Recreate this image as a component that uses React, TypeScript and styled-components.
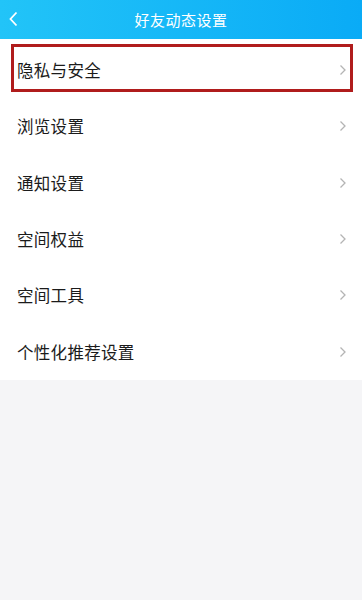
import React from "react";
import styled, { createGlobalStyle } from "styled-components";

const GlobalStyle = createGlobalStyle`
  html, body {
    margin: 0;
    padding: 0;
    background: #f5f5f7;
  }
  body {
    font-family: "Noto Sans CJK SC", "Noto Sans", sans-serif;
  }
`;

const Page = styled.div`
  width: 362px;
  min-height: 600px;
  background: #f5f5f7;
  display: flex;
  flex-direction: column;
`;

const Header = styled.header`
  height: 39px;
  background: linear-gradient(90deg, #22c4f8 0%, #0aabf6 100%);
  display: flex;
  align-items: center;
  justify-content: center;
  position: relative;
`;

const BackButton = styled.div`
  position: absolute;
  left: 8px;
  top: 10px;
  width: 12px;
  height: 18px;
  display: flex;
`;

const Title = styled.h1`
  margin: 0;
  font-size: 15px;
  font-weight: 400;
  color: #ffffff;
  letter-spacing: 0.5px;
`;

const List = styled.ul`
  list-style: none;
  margin: 0;
  padding: 3px 0 0;
  background: #ffffff;
`;

const Row = styled.li`
  position: relative;
  height: 56.3px;
  display: flex;
  align-items: center;
  justify-content: space-between;
  padding: 0 15px 0 17px;
  box-sizing: border-box;
`;

const Label = styled.span`
  font-size: 16.5px;
  color: #1b1b1b;
  letter-spacing: 0.3px;
`;

const Highlight = styled.div`
  position: absolute;
  left: 11px;
  right: 9px;
  top: 2px;
  bottom: 6px;
  border: 3px solid #b01c1c;
  box-sizing: border-box;
  pointer-events: none;
`;

const Chevron = () => (
  <svg width="8" height="12" viewBox="0 0 8 12" fill="none">
    <path d="M1.5 1.5L6 6L1.5 10.5" stroke="#b4b4b4" strokeWidth="1.3" />
  </svg>
);

const items = ["隐私与安全", "浏览设置", "通知设置", "空间权益", "空间工具", "个性化推荐设置"];

export default function App() {
  return (
    <>
      <GlobalStyle />
      <Page>
        <Header>
          <BackButton>
            <svg width="12" height="18" viewBox="0 0 12 18" fill="none">
              <path d="M8.5 2.5L2.5 9L8.5 15.5" stroke="#ffffff" strokeWidth="1.8" />
            </svg>
          </BackButton>
          <Title>好友动态设置</Title>
        </Header>
        <List>
          {items.map((it, i) => (
            <Row key={it}>
              {i === 0 && <Highlight />}
              <Label>{it}</Label>
              <Chevron />
            </Row>
          ))}
        </List>
      </Page>
    </>
  );
}
